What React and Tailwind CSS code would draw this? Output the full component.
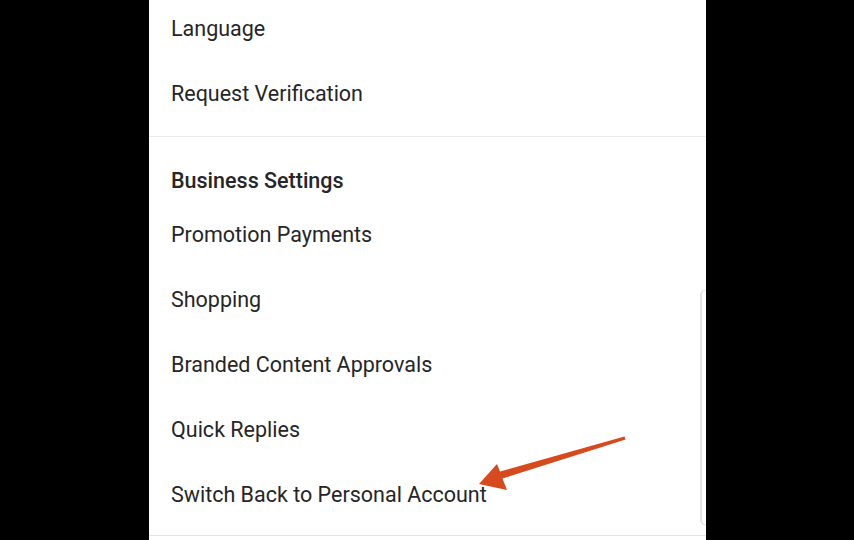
export default function App() {
  const rowCls = "leading-[24px] text-[21.5px] text-[#262626]";
  return (
    <div className="relative w-[854px] h-[540px] overflow-hidden bg-black" style={{ fontFamily: "Roboto, 'Liberation Sans', sans-serif" }}>
      <div className="relative ml-[149px] w-[557px] h-[540px] bg-white">
        <div className="flex flex-col gap-[41px] pl-[22px] pt-[17px] pb-[30px] border-b border-[#ebebeb]">
          <div className={rowCls}>Language</div>
          <div className={rowCls}>Request Verification</div>
        </div>
        <div className="pl-[22px] pt-[32px] pb-[28px] border-b border-[#e6e6e6]">
          <div className={rowCls + " font-medium"}>Business Settings</div>
          <div className="flex flex-col gap-[41px] mt-[30px]">
            <div className={rowCls}>Promotion Payments</div>
            <div className={rowCls}>Shopping</div>
            <div className={rowCls}>Branded Content Approvals</div>
            <div className={rowCls}>Quick Replies</div>
            <div className={rowCls}>Switch Back to Personal Account</div>
          </div>
        </div>
        <div className="absolute left-[551px] top-[290px] w-[6px] h-[235px] border-l-2 border-t border-b border-[#e2e2e2] rounded-l-[5px]" />
      </div>
      <svg className="absolute left-0 top-0" width="854" height="540" viewBox="0 0 854 540">
        <polygon
          points="479,484 497,464 500,471.6 624.5,436.4 625.6,439.6 502.5,478.5 507,490"
          fill="#d64a1e"
        />
      </svg>
    </div>
  );
}
